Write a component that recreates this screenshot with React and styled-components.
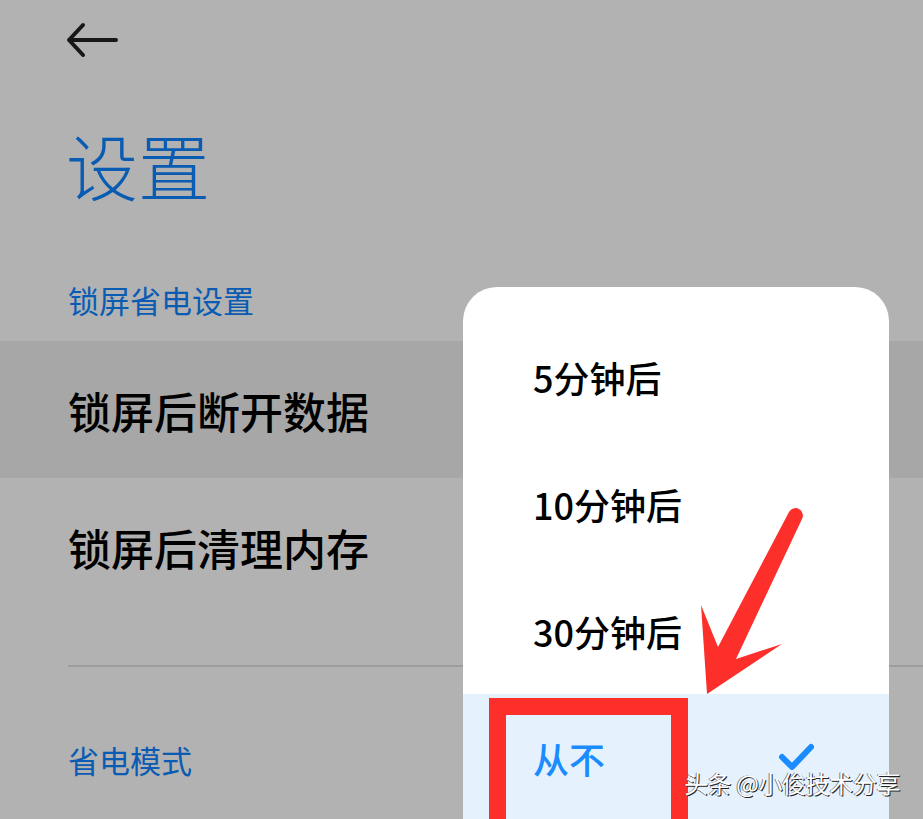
import React from "react";
import styled, { createGlobalStyle } from "styled-components";

const CJK = `"Noto Sans CJK SC", "Noto Sans", sans-serif`;

const Global = createGlobalStyle`
  html, body { margin: 0; padding: 0; background: #b3b3b3; }
  body { font-family: ${CJK}; }
  * { box-sizing: border-box; }
`;

const Screen = styled.div`
  position: relative;
  width: 923px;
  height: 819px;
  overflow: hidden;
  background: #ffffff;
`;

const Settings = styled.div`
  display: flex;
  flex-direction: column;
`;

const Header = styled.div`
  height: 80px;
  display: flex;
  align-items: center;
  padding-left: 66px;
`;

const Title = styled.h1`
  margin: 48px 0 0;
  padding-left: 66px;
  font-size: 72px;
  line-height: 72px;
  font-weight: 300;
  color: #0d84ff;
  letter-spacing: 0;
`;

const SectionLabel = styled.div`
  margin-top: ${(p) => p.$top}px;
  padding-left: 68px;
  font-size: 31px;
  line-height: 40px;
  color: #0d84ff;
`;

const Row = styled.div`
  height: 137px;
  display: flex;
  align-items: center;
  padding-left: 68px;
  font-size: 43px;
  font-weight: 500;
  color: #000;
  background: ${(p) => (p.$pressed ? "#efefef" : "transparent")};
  margin-top: ${(p) => p.$top || 0}px;
`;

const Divider = styled.div`
  margin: 50px 0 0 68px;
  height: 2px;
  background: #e2e2e2;
`;

const Dim = styled.div`
  position: absolute;
  inset: 0;
  background: rgba(0, 0, 0, 0.3);
`;

const Sheet = styled.div`
  position: absolute;
  left: 463px;
  top: 287px;
  width: 426px;
  height: 600px;
  background: #ffffff;
  border-radius: 34px;
  padding-top: 26px;
  overflow: hidden;
  display: flex;
  flex-direction: column;
`;

const Option = styled.div`
  height: 127px;
  flex: none;
  display: flex;
  align-items: center;
  justify-content: space-between;
  padding: 0 73px 0 70px;
  font-size: 36px;
  font-weight: 500;
  color: ${(p) => (p.$selected ? "#1a8cff" : "#000")};
  background: ${(p) => (p.$selected ? "#e5f1fd" : "transparent")};
`;

const Highlight = styled.div`
  position: absolute;
  left: 489px;
  top: 698px;
  width: 199px;
  height: 150px;
  border: 17px solid #fc2f2b;
`;

const Pointer = styled.svg`
  position: absolute;
  left: 690px;
  top: 500px;
`;

const Watermark = styled.div`
  position: absolute;
  left: 684px;
  top: 767px;
  font-size: 24px;
  line-height: 32px;
  color: #ffffff;
  white-space: nowrap;
  letter-spacing: -0.4px;
  text-shadow: 1px 1px 0 #222, -1px 0 0 rgba(0, 0, 0, 0.5);
`;

const BackIcon = () => (
  <svg width="52" height="36" viewBox="0 0 52 36" fill="none">
    <path
      d="M17 3 L3 18 L17 33 M3 18 H50"
      stroke="#222"
      strokeWidth="4"
      strokeLinecap="round"
      strokeLinejoin="round"
    />
  </svg>
);

const Check = () => (
  <svg width="38" height="32" viewBox="0 0 38 32" fill="none">
    <path
      d="M4 15 L14 25 L33 5"
      stroke="#1a8cff"
      strokeWidth="6"
      strokeLinecap="round"
      strokeLinejoin="round"
    />
  </svg>
);

const options = ["5分钟后", "10分钟后", "30分钟后", "从不"];

export default function App() {
  return (
    <>
      <Global />
      <Screen>
        <Settings>
          <Header>
            <BackIcon />
          </Header>
          <Title>设置</Title>
          <SectionLabel $top={80}>锁屏省电设置</SectionLabel>
          <Row $pressed $top={21}>锁屏后断开数据</Row>
          <Row>锁屏后清理内存</Row>
          <Divider />
          <SectionLabel $top={73}>省电模式</SectionLabel>
        </Settings>
        <Dim />
        <Sheet>
          {options.map((o, i) => (
            <Option key={o} $selected={i === options.length - 1}>
              <span>{o}</span>
              {i === options.length - 1 && <Check />}
            </Option>
          ))}
        </Sheet>
        <Highlight />
        <Pointer width="120" height="200" viewBox="0 0 120 200">
          <path
            d="M17 194 L11 105 L28 147 L99 12 A7.2 7.2 0 0 1 112 19 L46 159 L92 144 Z"
            fill="#fc2f2b"
          />
        </Pointer>
        <Watermark>头条 @小俊技术分享</Watermark>
      </Screen>
    </>
  );
}
